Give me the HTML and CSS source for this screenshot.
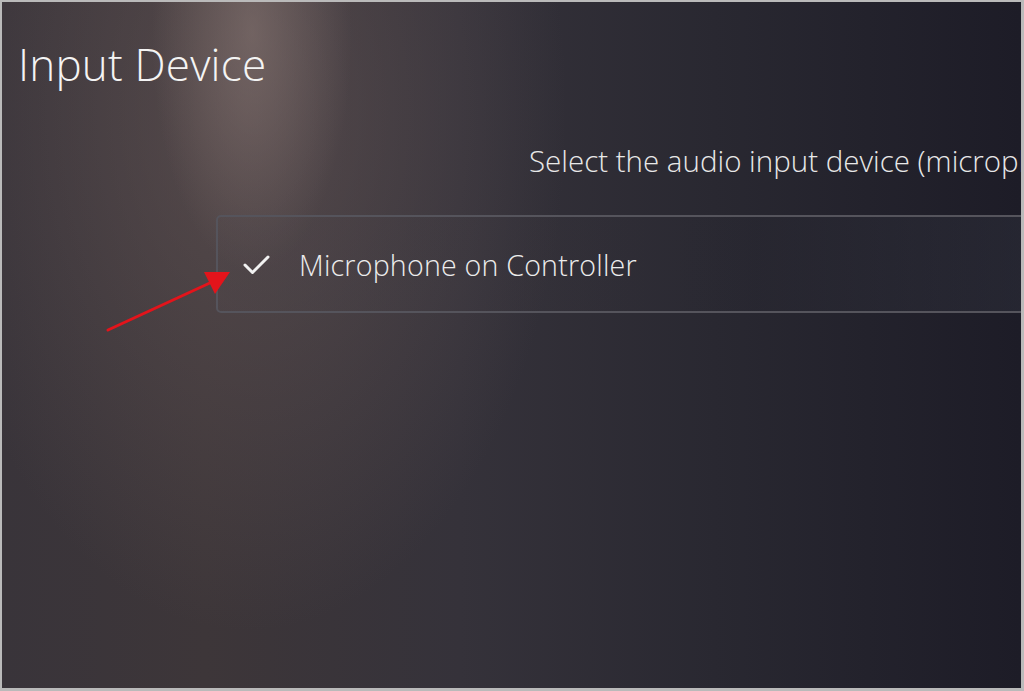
FILE: index.html
```html
<!DOCTYPE html>
<html lang="en">
<head>
    <meta charset="UTF-8">
    <title>Input Device</title>
    <link rel="stylesheet" href="styles.css">
</head>
<body>
    <div class="screen">
        <h1 class="title">Input Device</h1>
        <div class="hint">Select the audio input device (microphone) to use for voice chat and other features.</div>

        <div class="device-list">
            <div class="device selected">
                <svg class="check" width="28" height="22" viewBox="0 0 28 22">
                    <path d="M2 11 L9.5 18.5 L25 3" fill="none" stroke="#f2f2f2" stroke-width="3" stroke-linecap="round" stroke-linejoin="round"/>
                </svg>
                <span class="device-name">Microphone on Controller</span>
            </div>
        </div>

        <!-- annotation arrow -->
        <svg class="arrow" width="140" height="80" viewBox="0 0 140 80">
            <line x1="4" y1="72" x2="108" y2="24" stroke="#e3141b" stroke-width="3" stroke-linecap="round"/>
            <polygon points="126,14 100,14 111,36" fill="#e3141b"/>
        </svg>
    </div>
</body>
</html>
```

FILE: styles.css
```css
html, body {
    margin: 0;
    padding: 0;
    background: #bdbdbd;
}
.screen {
    position: relative;
    width: 1024px;
    height: 691px;
    box-sizing: border-box;
    border: 2px solid #bababa;
    border-right-width: 3px;
    border-bottom-width: 3px;
    overflow: hidden;
    font-family: "Open Sans", "Noto Sans", sans-serif;
    color: #f0f0f0;
    background:
        radial-gradient(ellipse 100px 240px at 250px 30px, rgba(140, 122, 118, 0.55), rgba(140, 122, 118, 0) 100%),
        radial-gradient(ellipse 320px 520px at 245px 110px, rgba(110, 94, 94, 0.5), rgba(110, 94, 94, 0) 100%),
        linear-gradient(90deg, #39343a 0%, #3d3639 20%, #35323a 45%, #292831 70%, #1d1c27 100%);
}
.title {
    margin: 0;
    padding: 34px 0 0 16px;
    font-size: 44px;
    font-weight: 300;
    line-height: 56px;
    letter-spacing: 0.2px;
    color: #f4f4f4;
}
.hint {
    margin: 49px 0 0 527px;
    font-size: 29.5px;
    font-weight: 300;
    line-height: 40px;
    white-space: nowrap;
    color: #e8e8e8;
}
.device-list {
    margin: 34px 0 0 214px;
}
.device {
    display: flex;
    align-items: center;
    gap: 28px;
    width: 900px;
    height: 98px;
    box-sizing: border-box;
    padding-left: 25px;
    border: 2px solid #55545c;
    border-radius: 5px;
    background: linear-gradient(90deg, rgba(80, 72, 76, 0.25), rgba(40, 40, 50, 0.2) 60%, rgba(60, 64, 76, 0.35));
}
.check {
    display: block;
    margin-top: 2px;
}
.device-name {
    font-size: 28.6px;
    font-weight: 300;
    color: #ececec;
    letter-spacing: 0.2px;
}
.arrow {
    position: absolute;
    left: 102px;
    top: 256px;
}
```
